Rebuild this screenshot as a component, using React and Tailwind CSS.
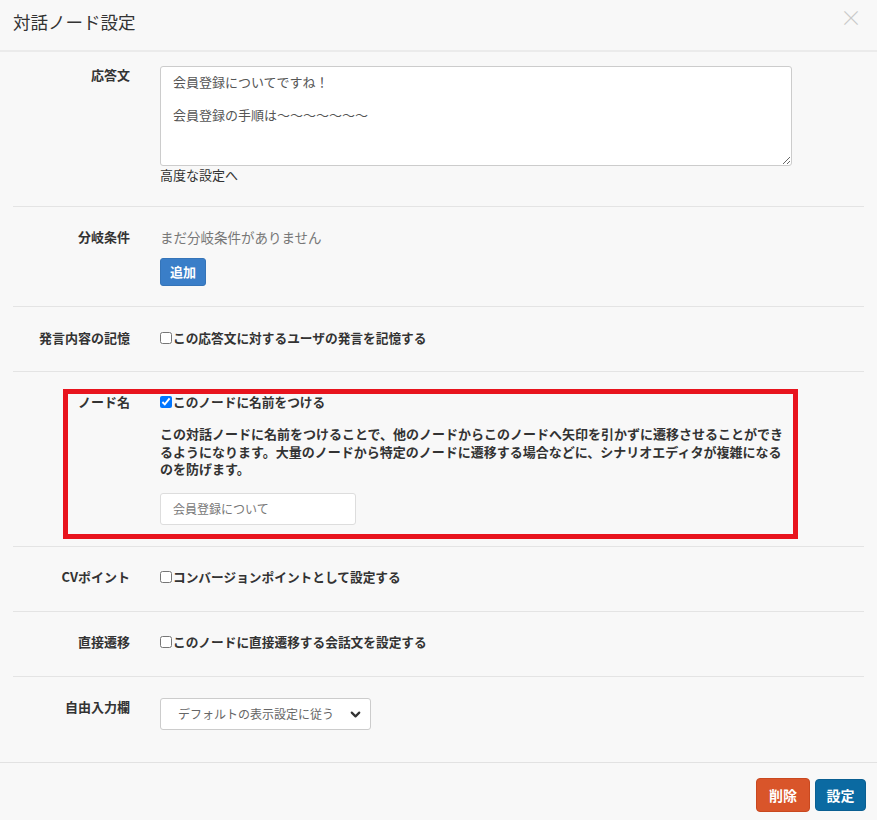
import { ChevronDown } from "lucide-react";

const font = "font-['Noto_Sans_CJK_JP','Noto_Sans',sans-serif]";

function Row({ label, children, className = "", last = false }) {
  return (
    <div className={`flex mx-[13px] ${last ? "" : "border-b border-[#e4e4e4]"} ${className}`}>
      <div className="w-[117px] shrink-0 text-right text-[13px] leading-[18px] font-bold text-[#333]">
        {label}
      </div>
      <div className="ml-[30px] w-[632px]">{children}</div>
    </div>
  );
}

function Check({ checked, text }) {
  return (
    <label className="flex items-center text-[12.7px] leading-[18px] font-bold text-[#333]">
      <input
        type="checkbox"
        defaultChecked={checked}
        className="m-0 w-[12px] h-[12px] mr-[1px]"
      />
      {text}
    </label>
  );
}

export default function App() {
  return (
    <div className={`w-full h-[820px] bg-[#f8f8f8] flex flex-col ${font}`}>
      {/* header */}
      <div className="h-[52px] shrink-0 border-b-2 border-[#ebebeb] flex items-start justify-between pl-[13px] pr-[15px]">
        <h1 className="mt-[11px] text-[17.5px] leading-[22px] text-[#333] font-normal">対話ノード設定</h1>
        <span className="mt-[4px] text-[22px] leading-[24px] text-[#c9c9c9] font-light">×</span>
      </div>

      {/* body */}
      <div className="flex-1">
        <Row label="応答文" className="pt-[14px] pb-[22px]">
          <textarea
            readOnly
            defaultValue={"会員登録についてですね！\n\n会員登録の手順は〜〜〜〜〜〜〜"}
            className="block w-full h-[100px] bg-white border border-[#cccccc] rounded-[3px] px-[12px] pt-[7px] text-[13px] leading-[16.5px] text-[#555] outline-none"
          />
          <div className="text-[13px] leading-[18px] text-[#333]">高度な設定へ</div>
        </Row>

        <Row label="分岐条件" className="pt-[21px] pb-[20px]">
          <div className="text-[13.5px] leading-[18px] text-[#777]">まだ分岐条件がありません</div>
          <button className="mt-[12px] w-[46px] h-[28px] rounded-[3px] bg-[#3a7ec8] border border-[#3574b8] text-white text-[13px] font-bold">
            追加
          </button>
        </Row>

        <Row label="発言内容の記憶" className="pt-[22px] pb-[24px]">
          <Check text="この応答文に対するユーザの発言を記憶する" />
        </Row>

        <Row label="ノード名" className="relative pt-[21px] pb-[21px]">
          <Check checked text="このノードに名前をつける" />
          <p className="mt-[14px] whitespace-nowrap text-[13px] leading-[17.5px] font-bold text-[#333]">
            この対話ノードに名前をつけることで、他のノードからこのノードへ矢印を引かずに遷移させることができ
            <br />
            るようになります。大量のノードから特定のノードに遷移する場合などに、シナリオエディタが複雑になる
            <br />
            のを防げます。
          </p>
          <div className="mt-[15.5px] w-[196px] h-[32px] bg-white border border-[#dddddd] rounded-[3px] pl-[12px] flex items-center text-[12px] text-[#777]">
            会員登録について
          </div>
          <div className="absolute left-[50px] top-[17px] w-[735px] h-[150px] border-[5px] border-[#e8141e] pointer-events-none" />
        </Row>

        <Row label="CVポイント" className="pt-[21px] pb-[25px]">
          <Check text="コンバージョンポイントとして設定する" />
        </Row>

        <Row label="直接遷移" className="pt-[21px] pb-[25px]">
          <Check text="このノードに直接遷移する会話文を設定する" />
        </Row>

        <Row label="自由入力欄" className="pt-[21px] pb-[31px]" last>
          <div className="w-[211px] h-[32px] bg-white border border-[#cccccc] rounded-[3px] flex items-center justify-between pl-[17px] pr-[7px] text-[12px] text-[#666]">
            <span>デフォルトの表示設定に従う</span>
            <ChevronDown size={15} strokeWidth={3.5} className="text-[#333]" />
          </div>
        </Row>
      </div>

      {/* footer */}
      <div className="h-[58px] shrink-0 border-t border-[#e2e2e2] flex items-start justify-end gap-[5px] pt-[15px] pr-[11px]">
        <button className="w-[54px] h-[34px] rounded-[4px] bg-[#d9552a] border border-[#c9481f] text-white text-[14px] font-bold">
          削除
        </button>
        <button className="w-[51px] h-[32px] mt-[1px] rounded-[4px] bg-[#0b6aa2] border border-[#0a5f92] text-white text-[14px] font-bold">
          設定
        </button>
      </div>
    </div>
  );
}
